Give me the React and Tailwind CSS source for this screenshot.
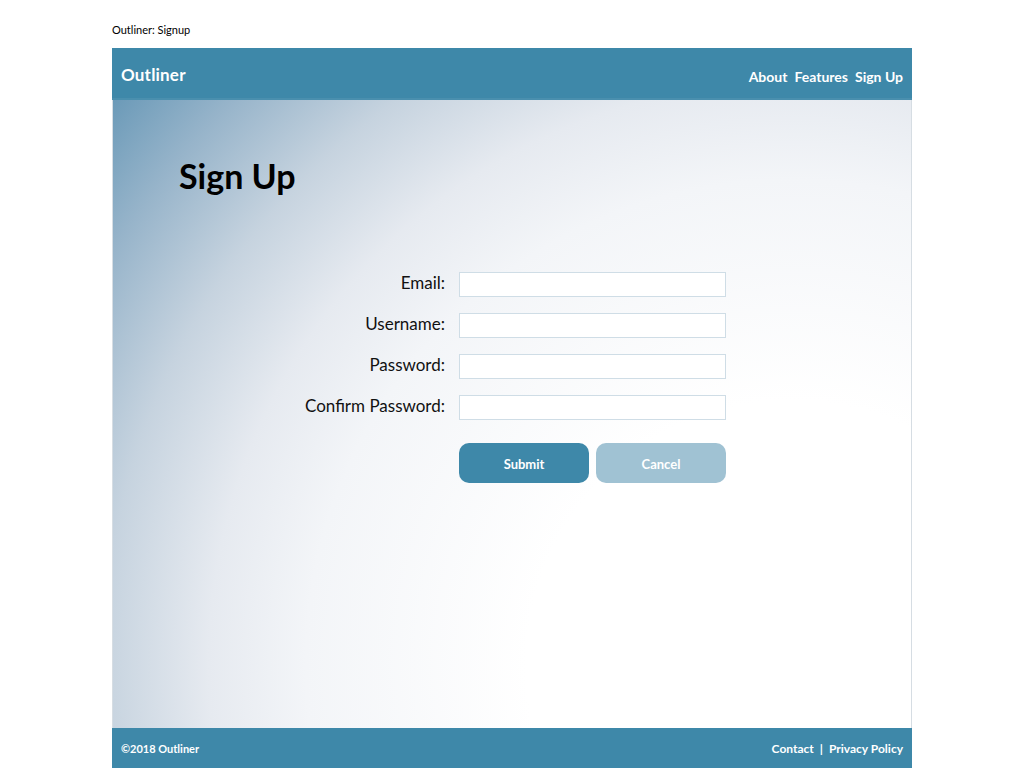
import React from 'react';

const fields = ['Email:', 'Username:', 'Password:', 'Confirm Password:'];

const App = () => {
  return (
    <div className="min-h-screen bg-white font-['Lato','Noto_Sans',sans-serif]">
      <div className="w-[800px] ml-[112px] pt-[22px]">
        <div className="text-[11px] leading-[16px] text-black h-[26px]">Outliner: Signup</div>

        {/* Header */}
        <header className="h-[52px] bg-[#3e88a9] flex items-center justify-between px-[9px] text-white border-b-2 border-[#4a8fae]">
          <div className="text-[17px] font-bold tracking-[0.2px] pt-[3px]">Outliner</div>
          <nav className="flex items-center gap-[7px] text-[14px] font-bold pt-[6px]">
            <a>About</a>
            <a>Features</a>
            <a>Sign Up</a>
          </nav>
        </header>

        {/* Main */}
        <main className="h-[628px] border-x border-[#d6dde3] bg-[radial-gradient(circle_farthest-corner_at_85%_90%,#ffffff_0%,#ffffff_30%,#f3f5f8_55%,#e6eaf0_66%,#c6d3df_78%,#97b4ca_90%,#6b9ab8_100%)]">
          <h1 className="pt-[55px] pl-[66px] text-[34px] leading-[42px] font-bold text-black">Sign Up</h1>

          <form className="mt-[75px] ml-[346px] w-[267px] flex flex-col gap-[16px]">
            {fields.map((label) => (
              <div key={label} className="relative h-[25px]">
                <label className="absolute right-[281px] -top-[1px] whitespace-nowrap text-[17px] leading-[24px] text-[#111]">
                  {label}
                </label>
                <input
                  type={label.includes('Password') ? 'password' : 'text'}
                  className="w-full h-[25px] bg-white border border-[#cfdde6] outline-none"
                />
              </div>
            ))}
            <div className="flex gap-[7px] mt-[7px]">
              <button type="button" className="w-[130px] h-[40px] rounded-[10px] bg-[#3e88a9] text-white text-[13px] font-bold pt-[3px]">
                Submit
              </button>
              <button type="button" className="w-[130px] h-[40px] rounded-[10px] bg-[#a0c2d3] text-white text-[13px] font-bold pt-[3px]">
                Cancel
              </button>
            </div>
          </form>
        </main>

        {/* Footer */}
        <footer className="h-[40px] bg-[#3e88a9] flex items-center justify-between px-[9px] text-white text-[12px] font-bold pt-[2px]">
          <div className="text-[11px]">©2018 Outliner</div>
          <div className="flex items-center gap-[6px]">
            <a>Contact</a>
            <span>|</span>
            <a>Privacy Policy</a>
          </div>
        </footer>
      </div>
    </div>
  );
};

export default App;
